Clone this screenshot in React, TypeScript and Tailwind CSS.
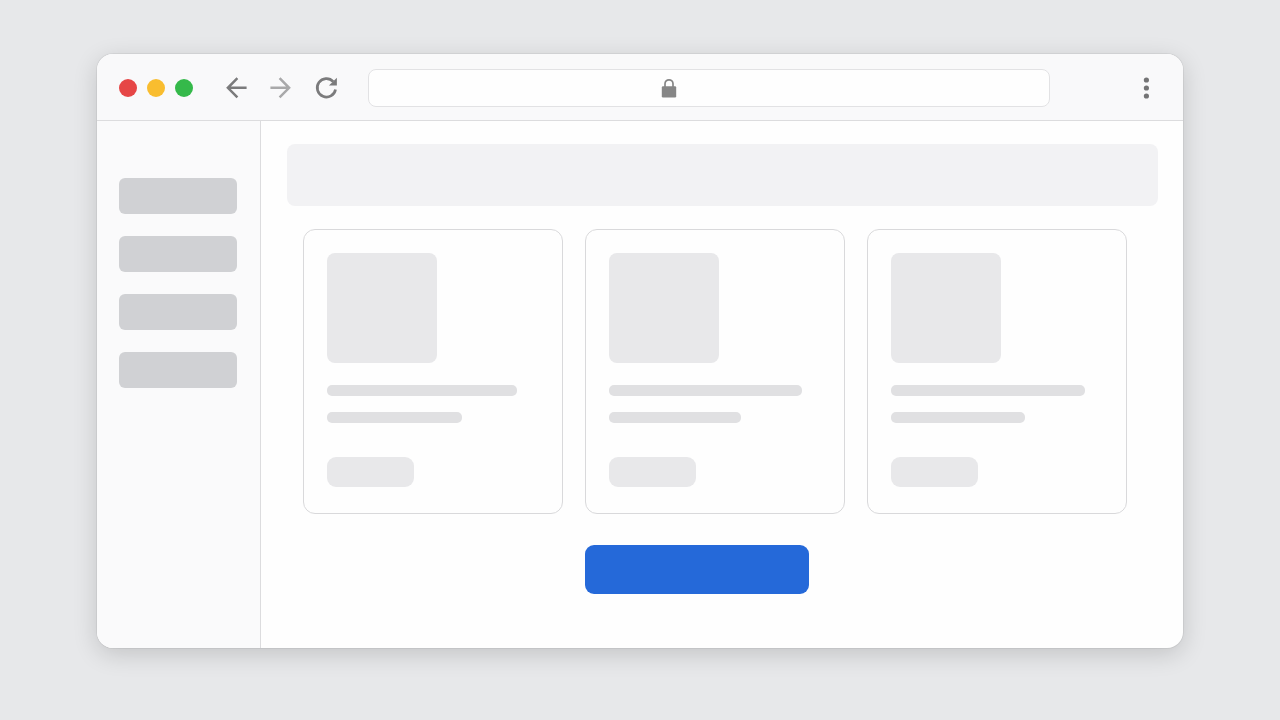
const navItems = ['Section 1', 'Section 2', 'Section 3', 'Section 4']

const cards = [
  { id: 1, title: 'w-[190px]', subtitle: 'w-[135px]' },
  { id: 2, title: 'w-[193px]', subtitle: 'w-[132px]' },
  { id: 3, title: 'w-[194px]', subtitle: 'w-[134px]' },
]

function Toolbar() {
  return (
    <header className="flex items-center border-b border-[#dcdcde] bg-[#f9f9fa] pt-[15px] pb-[13px] pl-[22px] pr-[23px]">
      {/* window controls */}
      <div className="flex gap-[10px]">
        <button aria-label="Close" className="size-[18px] rounded-full bg-[#e64646]" />
        <button aria-label="Minimize" className="size-[18px] rounded-full bg-[#f9bd2f]" />
        <button aria-label="Maximize" className="size-[18px] rounded-full bg-[#35b94a]" />
      </div>

      {/* navigation */}
      <nav className="ml-[29px] flex gap-[17px]">
        <button aria-label="Back" className="size-7 text-[#7b7b7c]">
          <svg viewBox="0 0 28 28" className="size-7" fill="none" stroke="currentColor" strokeWidth="2.5">
            <path d="M24.6 13.8H6.4M15.4 4.2L5.9 13.8l9.5 9.6" />
          </svg>
        </button>
        <button aria-label="Forward" className="size-7 text-[#a9a9aa]">
          <svg viewBox="0 0 28 28" className="size-7" fill="none" stroke="currentColor" strokeWidth="2.5">
            <path d="M3.4 13.8h18.4M12.6 4.2l9.5 9.6-9.5 9.6" />
          </svg>
        </button>
        <button aria-label="Reload" className="size-7 text-[#7b7b7c]">
          <svg viewBox="0 0 28 28" className="size-7">
            <path
              d="M23.5 15.4A9.2 9.2 0 1 1 21.2 7.6"
              fill="none"
              stroke="currentColor"
              strokeWidth="2.7"
            />
            <path d="M24.9 3.8v7.8h-8z" fill="currentColor" />
          </svg>
        </button>
      </nav>

      {/* address bar */}
      <div className="relative ml-7 flex-1">
        <input
          type="text"
          aria-label="Address"
          className="block h-[38px] w-full rounded-lg border border-[#e2e2e4] bg-[#fefefe] px-4 font-['Liberation_Sans',sans-serif] text-sm outline-none"
        />
        <svg viewBox="0 0 16 20" className="absolute top-[9px] left-[43%] h-5 w-4 text-[#868686]">
          <path d="M4 9V5.8a4 4 0 0 1 8 0V9" fill="none" stroke="currentColor" strokeWidth="1.7" />
          <rect x="0.8" y="8.3" width="14.4" height="11.2" rx="1.2" fill="currentColor" />
        </svg>
      </div>

      <button aria-label="Menu" className="ml-[82px] size-7 text-[#747475]">
        <svg viewBox="0 0 28 28" className="size-7" fill="currentColor">
          <circle cx="14.4" cy="6" r="2.6" />
          <circle cx="14.4" cy="14" r="2.6" />
          <circle cx="14.4" cy="22" r="2.6" />
        </svg>
      </button>
    </header>
  )
}

function Sidebar() {
  return (
    <aside className="w-[164px] shrink-0 border-r border-[#dcdcde] bg-[#fafafb] pt-[57px] pr-[23px] pl-[22px]">
      <ul className="space-y-[22px]">
        {navItems.map((item) => (
          <li key={item}>
            <button aria-label={item} className="block h-9 w-full rounded-md bg-[#d0d1d4]" />
          </li>
        ))}
      </ul>
    </aside>
  )
}

function Card({ title, subtitle }: { title: string; subtitle: string }) {
  return (
    <article className="rounded-xl border border-[#d9d9db] px-[23px] pt-[23px] pb-[26px]">
      <div className="size-[110px] rounded-lg bg-[#e8e8ea]" />
      <div className={`mt-[22px] h-[11px] rounded-[5px] ${title} bg-[#e0e0e2]`} />
      <div className={`mt-4 h-[11px] rounded-[5px] ${subtitle} bg-[#e0e0e2]`} />
      <button aria-label="Details" className="mt-[34px] block h-[30px] w-[87px] rounded-[9px] bg-[#e8e8ea]" />
    </article>
  )
}

export default function App() {
  return (
    <div className="flex min-h-screen bg-[#e7e8ea] px-[97px] pt-[54px] pb-[72px]">
      <div className="flex flex-1 flex-col overflow-hidden rounded-2xl bg-[#fefefe] shadow-[0_0_0_1px_rgba(0,0,0,0.05),0_6px_24px_rgba(0,0,0,0.16)]">
        <Toolbar />
        <div className="flex flex-1">
          <Sidebar />
          <main className="flex-1 pt-[23px] pr-[25px] pb-[54px] pl-[26px]">
            <div className="h-[62px] rounded-lg bg-[#f2f2f4]" />
            <div className="mt-[23px] mr-[31px] ml-4 grid grid-cols-3 gap-x-[22px] gap-y-[31px]">
              {cards.map((card) => (
                <Card key={card.id} title={card.title} subtitle={card.subtitle} />
              ))}
              <button
                aria-label="Continue"
                className="col-start-2 h-[49px] w-56 rounded-[9px] bg-[#2569d9]"
              />
            </div>
          </main>
        </div>
      </div>
    </div>
  )
}
